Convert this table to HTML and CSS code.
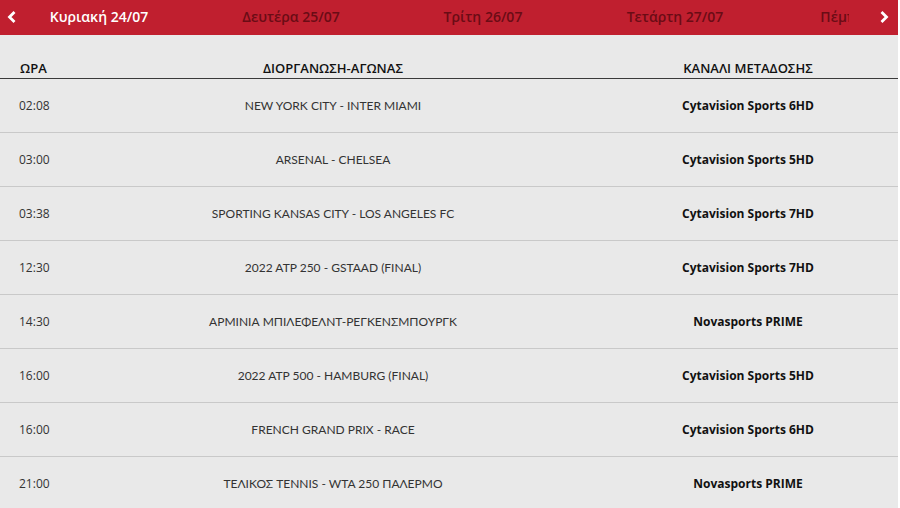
FILE: index.html
```html
<!DOCTYPE html>
<html lang="el">
<head>
<meta charset="utf-8">
<title>Πρόγραμμα</title>
<link rel="stylesheet" href="styles.css">
</head>
<body>
<div class="page">
  <div class="days">
    <div class="strip">
      <div class="day active">Κυριακή 24/07</div>
      <div class="day">Δευτέρα 25/07</div>
      <div class="day">Τρίτη 26/07</div>
      <div class="day">Τετάρτη 27/07</div>
      <div class="day">Πέμπτη 28/07</div>
    </div>
    <span class="arrow left"><svg width="10" height="12" viewBox="0 0 10 12"><polyline points="7.5,1 2.5,6 7.5,11" fill="none" stroke="#fff" stroke-width="2.8"/></svg></span>
    <span class="arrow right"><svg width="10" height="12" viewBox="0 0 10 12"><polyline points="2.5,1 7.5,6 2.5,11" fill="none" stroke="#fff" stroke-width="2.8"/></svg></span>
  </div>
  <div class="table">
    <div class="row head">
      <div class="c1">ΩΡΑ</div>
      <div class="c2">ΔΙΟΡΓΑΝΩΣΗ-ΑΓΩΝΑΣ</div>
      <div class="c3">ΚΑΝΑΛΙ ΜΕΤΑΔΟΣΗΣ</div>
    </div>
    <div class="row">
      <div class="c1">02:08</div>
      <div class="c2">NEW YORK CITY - INTER MIAMI</div>
      <div class="c3">Cytavision Sports 6HD</div>
    </div>
    <div class="row">
      <div class="c1">03:00</div>
      <div class="c2">ARSENAL - CHELSEA</div>
      <div class="c3">Cytavision Sports 5HD</div>
    </div>
    <div class="row">
      <div class="c1">03:38</div>
      <div class="c2">SPORTING KANSAS CITY - LOS ANGELES FC</div>
      <div class="c3">Cytavision Sports 7HD</div>
    </div>
    <div class="row">
      <div class="c1">12:30</div>
      <div class="c2">2022 ATP 250 - GSTAAD (FINAL)</div>
      <div class="c3">Cytavision Sports 7HD</div>
    </div>
    <div class="row">
      <div class="c1">14:30</div>
      <div class="c2">ΑΡΜΙΝΙΑ ΜΠΙΛΕΦΕΛΝΤ-ΡΕΓΚΕΝΣΜΠΟΥΡΓΚ</div>
      <div class="c3">Novasports PRIME</div>
    </div>
    <div class="row">
      <div class="c1">16:00</div>
      <div class="c2">2022 ATP 500 - HAMBURG (FINAL)</div>
      <div class="c3">Cytavision Sports 5HD</div>
    </div>
    <div class="row">
      <div class="c1">16:00</div>
      <div class="c2">FRENCH GRAND PRIX - RACE</div>
      <div class="c3">Cytavision Sports 6HD</div>
    </div>
    <div class="row">
      <div class="c1">21:00</div>
      <div class="c2">ΤΕΛΙΚΟΣ TENNIS - WTA 250 ΠΑΛΕΡΜΟ</div>
      <div class="c3">Novasports PRIME</div>
    </div>
  </div>
</div>
</body>
</html>
```
FILE: styles.css
```css
html, body {
  margin: 0;
  padding: 0;
  background: #ffffff;
}
body {
  font-family: "Open Sans", "Liberation Sans", sans-serif;
  color: #222;
}
.page {
  width: 898px;
  height: 508px;
  background: #e9e9e9;
  overflow: hidden;
}
.days {
  position: relative;
  height: 35px;
  background: #c01f2f;
}
.strip {
  display: flex;
  width: 849px;
  height: 35px;
  padding-left: 3px;
  box-sizing: border-box;
  overflow: hidden;
}
.day {
  flex: 0 0 192px;
  text-align: center;
  line-height: 34px;
  font-size: 14px;
  font-weight: 600;
  color: #6a0c15;
  white-space: nowrap;
}
.day.active {
  color: #ffffff;
}
.arrow {
  position: absolute;
  top: 11px;
  display: block;
  line-height: 0;
}
.arrow.left { left: 7px; }
.arrow.right { left: 879px; }
.row {
  display: grid;
  grid-template-columns: 68px 530px 300px;
  align-items: center;
  height: 53px;
  border-bottom: 1px solid #c9c9c9;
  font-size: 12px;
}
.row.head {
  height: 41px;
  align-items: end;
  border-bottom: 1px solid #3a3a3a;
  font-size: 13px;
  font-weight: 600;
  color: #111;
  line-height: 16px;
  padding-bottom: 2px;
  box-sizing: content-box;
}
.row.head .c2, .row.head .c3 {
  font-family: "Open Sans", sans-serif;
  font-weight: 600;
  font-size: 13px;
  color: #111;
}
.c1 {
  padding-left: 19px;
  color: #333;
}
.row.head .c1 { color: #111; padding-left: 20px; }
.c2 {
  text-align: center;
  font-family: "Lato", "Open Sans", sans-serif;
  color: #333;
}
.c3 {
  text-align: center;
  font-weight: 700;
  color: #111;
}
```
